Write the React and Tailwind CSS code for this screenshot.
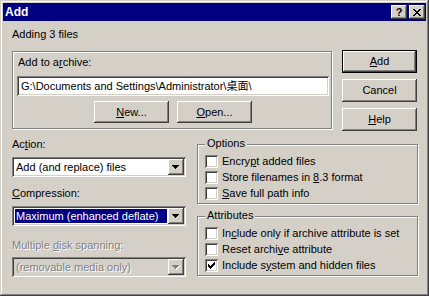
const raised =
  'shadow-[inset_-1px_-1px_#404040,inset_1px_1px_#fff,inset_-2px_-2px_#808080,inset_2px_2px_#d4d0c8]'
const sunken =
  'shadow-[inset_1px_1px_#808080,inset_-1px_-1px_#fff,inset_2px_2px_#404040,inset_-2px_-2px_#d4d0c8]'
const etched = 'border border-[#808080] shadow-[1px_1px_#fff,inset_1px_1px_#fff]'

function Arrow({ disabled }) {
  const d = 'M0 0h7v1h-7zM1 1h5v1h-5zM2 2h3v1h-3zM3 3h1v1h-1z'
  return (
    <svg width="8" height="5" viewBox="0 0 8 5" shapeRendering="crispEdges" aria-hidden="true">
      {disabled && <path d={d} fill="#fff" transform="translate(1 1)" />}
      <path d={d} fill={disabled ? '#808080' : '#000'} />
    </svg>
  )
}

function Combo({ children, selected, disabled }) {
  return (
    <div className={`${sunken} ${disabled ? 'bg-[#d4d0c8]' : 'bg-white'} flex h-[20px] w-[174px] p-[2px]`}>
      <div className="flex min-w-0 flex-1 p-[1px]">
        <span
          className={`flex h-full w-full items-center whitespace-nowrap pl-[1px] ${
            selected ? 'bg-[#000080] text-white' : ''
          } ${disabled ? 'text-[#808080] [text-shadow:1px_1px_#fff]' : ''}`}
        >
          {children}
        </span>
      </div>
      <div className={`${raised} flex h-[16px] w-[16px] items-center justify-center bg-[#d4d0c8] pt-[1px]`}>
        <Arrow disabled={disabled} />
      </div>
    </div>
  )
}

function Check({ checked }) {
  return (
    <div className={`${sunken} flex h-[13px] w-[13px] shrink-0 items-center justify-center bg-white`}>
      {checked && (
        <svg width="7" height="7" viewBox="0 0 7 7" shapeRendering="crispEdges" aria-hidden="true">
          <path d="M6 0h1v1h-1zM5 1h2v1h-2zM0 2h1v1h-1zM4 2h3v1h-3zM0 3h2v1h-2zM3 3h3v1h-3zM0 4h5v1h-5zM1 5h3v1h-3zM2 6h1v1h-1z" />
        </svg>
      )}
    </div>
  )
}

function CheckRow({ checked, children }) {
  return (
    <div className="flex h-[16px] items-center">
      <Check checked={checked} />
      <span className="ml-[4px] whitespace-nowrap">{children}</span>
    </div>
  )
}

function Group({ title, children }) {
  return (
    <div className={`${etched} relative h-[60px] pl-[7px] pt-[8px]`}>
      <span className="absolute -top-[8px] left-[7px] bg-[#d4d0c8] px-[2px]">{title}</span>
      {children}
    </div>
  )
}

function Button({ children, def, className = '' }) {
  const frame = def
    ? 'shadow-[inset_0_0_0_1px_#000,inset_-2px_-2px_#404040,inset_2px_2px_#fff,inset_-3px_-3px_#808080,inset_3px_3px_#d4d0c8]'
    : raised
  return <div className={`${frame} flex items-center justify-center bg-[#d4d0c8] ${className}`}>{children}</div>
}

export default function App() {
  return (
    <div className="flex h-[296px] w-[429px] flex-col bg-[#d4d0c8] p-[3px] font-['Liberation_Sans','Noto_Sans_CJK_SC',sans-serif] text-[11px] leading-[13px] text-black shadow-[inset_-1px_-1px_#404040,inset_1px_1px_#d4d0c8,inset_-2px_-2px_#808080,inset_2px_2px_#fff]">
      <div className="flex h-[18px] items-center bg-[#000080] pl-[2px] pr-[1px]">
        <span className="text-[12px] font-bold leading-[14px] text-white">Add</span>
        <div className="ml-auto flex gap-[2px]">
          <div className={`${raised} flex h-[14px] w-[16px] items-center justify-center bg-[#d4d0c8] text-[11px] font-bold leading-[11px]`}>
            ?
          </div>
          <div className={`${raised} flex h-[14px] w-[16px] items-center justify-center bg-[#d4d0c8]`}>
            <svg width="8" height="7" viewBox="0 0 8 7" shapeRendering="crispEdges" aria-hidden="true">
              <path d="M0 0h2v1h-2zM6 0h2v1h-2zM1 1h2v1h-2zM5 1h2v1h-2zM2 2h4v1h-4zM3 3h2v1h-2zM2 4h4v1h-4zM1 5h2v1h-2zM5 5h2v1h-2zM0 6h2v1h-2zM6 6h2v1h-2z" />
            </svg>
          </div>
        </div>
      </div>

      <div className="flex flex-col pl-[9px]">
        <p className="mt-[7px]">Adding 3 files</p>

        <div className="mt-[9px] flex items-start">
          <div className={`${etched} mt-[1px] flex h-[78px] w-[320px] flex-col pl-[4px] pt-[4px]`}>
            <p className="ml-[1px]">
              Add to a<u>r</u>chive:
            </p>
            <div className={`${sunken} mt-[7px] flex h-[20px] w-[312px] items-center overflow-hidden whitespace-nowrap bg-white pl-[4px]`}>
              {'G:\\Documents and Settings\\Administrator\\桌面\\'}
            </div>
            <div className="mt-[5px] flex">
              <Button className="ml-[77px] h-[22px] w-[75px]">
                <span>
                  <u>N</u>ew...
                </span>
              </Button>
              <Button className="ml-[8px] h-[22px] w-[75px]">
                <span>
                  <u>O</u>pen...
                </span>
              </Button>
            </div>
          </div>

          <div className="ml-[10px] flex flex-col gap-[6px]">
            <Button def className="h-[23px] w-[75px]">
              <span>
                <u>A</u>dd
              </span>
            </Button>
            <Button className="h-[23px] w-[75px]">Cancel</Button>
            <Button className="h-[23px] w-[75px]">
              <span>
                <u>H</u>elp
              </span>
            </Button>
          </div>
        </div>

        <div className="mt-[7px] flex">
          <div className="flex w-[174px] flex-col">
            <p>
              Ac<u>t</u>ion:
            </p>
            <div className="mt-[6px]">
              <Combo>Add (and replace) files</Combo>
            </div>
            <p className="mt-[10px]">
              <u>C</u>ompression:
            </p>
            <div className="mt-[6px]">
              <Combo selected>Maximum (enhanced deflate)</Combo>
            </div>
            <p className="mt-[13px] text-[#808080] [text-shadow:1px_1px_#fff]">
              Multiple <u>d</u>isk spanning:
            </p>
            <div className="mt-[5px]">
              <Combo disabled>(removable media only)</Combo>
            </div>
          </div>

          <div className="ml-[11px] flex w-[221px] flex-col">
            <div className="mt-[6px]">
              <Group title="Options">
                <CheckRow>
                  Encry<u>p</u>t added files
                </CheckRow>
                <CheckRow>
                  Store filenames in <u>8</u>.3 format
                </CheckRow>
                <CheckRow>
                  <u>S</u>ave full path info
                </CheckRow>
              </Group>
            </div>
            <div className="mt-[12px]">
              <Group title="Attributes">
                <CheckRow>
                  In<u>c</u>lude only if archive attribute is set
                </CheckRow>
                <CheckRow>
                  Reset archi<u>v</u>e attribute
                </CheckRow>
                <CheckRow checked>
                  Include s<u>y</u>stem and hidden files
                </CheckRow>
              </Group>
            </div>
          </div>
        </div>
      </div>
    </div>
  )
}
